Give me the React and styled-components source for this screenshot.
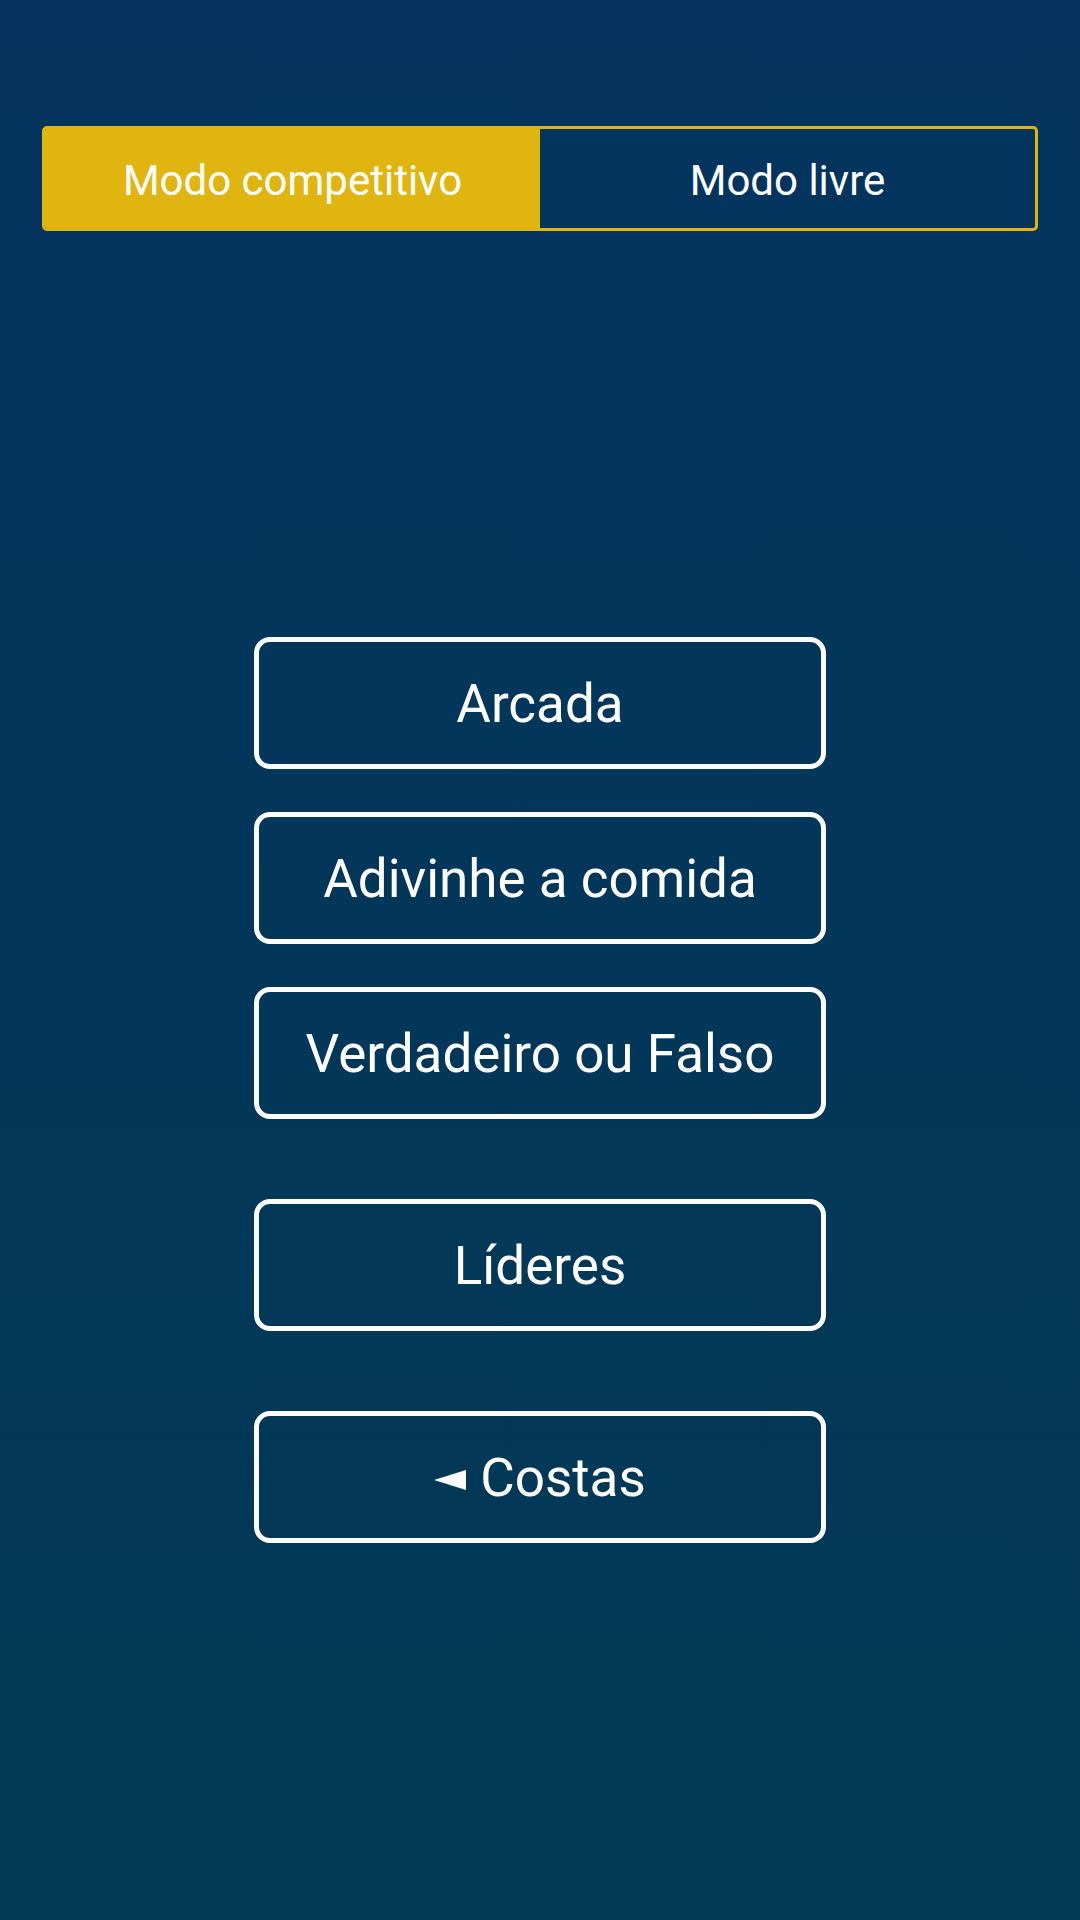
import React, { useState } from "react";
import styled, { createGlobalStyle } from "styled-components";

const GlobalStyle = createGlobalStyle`
  html, body {
    margin: 0;
    padding: 0;
  }
  body {
    font-family: Roboto, "Noto Sans", "DejaVu Sans", sans-serif;
  }
`;

const Screen = styled.div`
  width: 1080px;
  height: 1920px;
  box-sizing: border-box;
  background: linear-gradient(180deg, #04345f 0%, #023a54 100%);
  padding: 126px 42px 0;
  display: flex;
  flex-direction: column;
`;

const ModeBar = styled.div`
  display: flex;
  height: 105px;
  box-sizing: border-box;
  border: 3px solid #e1b510;
  border-radius: 5px;
  overflow: hidden;
`;

const ModeTab = styled.button`
  flex: 1;
  border: none;
  margin: 0;
  padding: 4px 0 0;
  background: ${(p) => (p.active ? "#e1b510" : "transparent")};
  color: #ffffff;
  font-family: Roboto, sans-serif;
  font-size: 42px;
  cursor: pointer;
`;

const Menu = styled.div`
  display: flex;
  flex-direction: column;
  align-items: center;
  margin-top: 406px;
`;

const MenuButton = styled.button`
  width: 572px;
  height: 132px;
  box-sizing: border-box;
  border: 5px solid #ffffff;
  border-radius: 16px;
  background: transparent;
  color: #ffffff;
  font-family: Roboto, sans-serif;
  font-size: 53px;
  margin-top: ${(p) => p.gap || 0}px;
  padding: 2px 0 0;
  display: flex;
  align-items: center;
  justify-content: center;
  gap: 14px;
  cursor: pointer;
`;

const BackArrow = styled.svg`
  width: 32px;
  height: 20px;
  margin-top: 4px;
`;

const items = [
  { label: "Arcada", gap: 0 },
  { label: "Adivinhe a comida", gap: 43 },
  { label: "Verdadeiro ou Falso", gap: 43 },
  { label: "Líderes", gap: 80 },
];

const App = () => {
  const [mode, setMode] = useState(0);
  return (
    <Screen>
      <GlobalStyle />
      <ModeBar>
        <ModeTab active={mode === 0} onClick={() => setMode(0)}>
          Modo competitivo
        </ModeTab>
        <ModeTab active={mode === 1} onClick={() => setMode(1)}>
          Modo livre
        </ModeTab>
      </ModeBar>
      <Menu>
        {items.map((it) => (
          <MenuButton key={it.label} gap={it.gap}>
            {it.label}
          </MenuButton>
        ))}
        <MenuButton gap={80}>
          <BackArrow viewBox="0 0 32 20">
            <polygon points="0,10 32,0 32,20" fill="#ffffff" />
          </BackArrow>
          Costas
        </MenuButton>
      </Menu>
    </Screen>
  );
};

export default App;
